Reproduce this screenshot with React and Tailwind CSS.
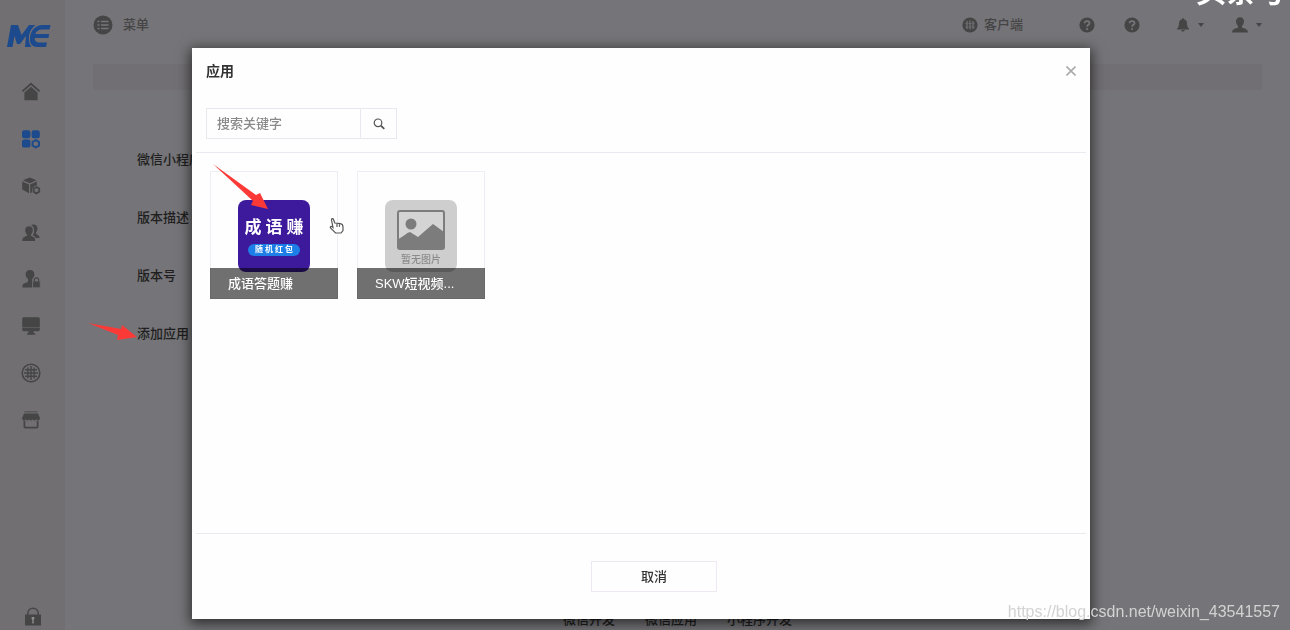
import React, { useState } from "react";

const SIDE_ITEMS = [
  { id: "home", label: "首页" },
  { id: "apps", label: "应用" },
  { id: "box", label: "模块" },
  { id: "users", label: "用户" },
  { id: "userlock", label: "权限" },
  { id: "monitor", label: "系统" },
  { id: "globe", label: "站点" },
  { id: "shop", label: "商城" },
];

const APPS = [
  { id: 1, name: "成语答题赚", cover: "idiom" },
  { id: 2, name: "SKW短视频...", cover: "empty" },
];

const FORM_LABELS = ["微信小程序", "版本描述", "版本号", "添加应用"];

function SideIcon({ name }) {
  const common = {
    viewBox: "0 0 20 20",
    className: "w-5 h-5",
    fill: "currentColor",
    "aria-hidden": true,
  };
  switch (name) {
    case "home":
      return (
        <svg {...common}>
          <path
            d="M1.4 9.400 10 1.800l8.600 7.600"
            fill="none"
            stroke="currentColor"
            strokeWidth="1.800"
          />
          <path d="M10 4.800 3.400 10.600v7.600h13.200v-7.600z" />
        </svg>
      );
    case "apps":
      return (
        <svg {...common}>
          <rect x="1" y="1.200" width="8.400" height="8" rx="2.200" />
          <rect x="10.600" y="1.200" width="8.200" height="8" rx="2.200" />
          <rect x="1" y="10.600" width="8.400" height="8" rx="2.200" />
          <path
            d="m14.800 11.200 3.200 1.800v3.600l-3.200 1.800-3.200-1.800V13z"
            fill="none"
            stroke="currentColor"
            strokeWidth="2"
          />
        </svg>
      );
    case "box":
      return (
        <svg {...common}>
          <path d="m8.800 1.600 6.600 2.600-6.600 3-6.800-3z" />
          <path d="M1.200 5.400 8 8.600v8.600l-6.800-3.600z" />
          <path d="m9.200 8.600 6.600-3.200v4.200c-3 .2-4.800 2-4.800 4.800l.2 1.800-2 1z" />
          <path
            d="m15.400 11 2.800 1.600v3.200l-2.800 1.600-2.800-1.600v-3.200z"
            fill="none"
            stroke="currentColor"
            strokeWidth="1.800"
          />
        </svg>
      );
    case "users":
      return (
        <svg {...common}>
          <path d="M8 3.200c2.400 0 3.800 1.600 3.800 4 0 1.900-.8 3.400-1.800 4.200v1.200c0 .6 3.600 1.400 4 3.200.1.600.1 1.400 0 2.200H1.400c0-1 0-1.800.2-2.400.6-1.600 4.200-2.400 4.400-3v-1.200C5 10.600 4.200 9.100 4.200 7.200c0-2.400 1.400-4 3.800-4z" />
          <path d="M11 1.700c3.200-.8 5.800.8 5.400 4.400-.1 1.500-.7 2.500-1.400 3.300v1c.6.9 3.400 1.300 3.600 4.600h-3.800c-.6-1.400-2-2.200-3.200-2.700 1.100-1.400 1.700-3.100 1.500-5.300-.2-2.300-1-3.900-2.900-4.800z" />
        </svg>
      );
    case "userlock":
      return (
        <svg {...common}>
          <path d="M9 1c2.900 0 4.400 1.900 4.400 4.300 0 2.100-1 3.700-2.200 4.700v8.600H1.400c0-1.200 0-2 .3-2.600.8-1.800 4.700-2.200 5.300-3.400V10C5.600 9 4.600 7.400 4.600 5.300 4.600 2.900 6.100 1 9 1z" />
          <rect
            x="11.600"
            y="12"
            width="7.600"
            height="6.800"
            rx=".8"
            stroke="#716f72"
            strokeWidth=".8"
          />
          <path
            d="M13.400 12.200v-1.400c0-2.600 4.200-2.600 4.200 0v1.400"
            fill="none"
            stroke="currentColor"
            strokeWidth="1.200"
          />
        </svg>
      );
    case "monitor":
      return (
        <svg {...common}>
          <path d="M2.800 1.200h14.400c.9 0 1.600.7 1.600 1.600v8.600H1.200V2.800c0-.9.700-1.600 1.600-1.600z" />
          <path d="M1.200 12h17.600v1.600c0 .9-.7 1.600-1.600 1.600H12.600v2h1.600v1.600H6v-1.600h1.400v-2H2.800c-.9 0-1.600-.7-1.600-1.600z" />
        </svg>
      );
    case "globe":
      return (
        <svg {...common} fill="none" stroke="currentColor" strokeWidth="1.400">
          <circle cx="10" cy="10" r="8.800" strokeWidth="1.600" />
          <path d="M10 3v14M6.900 4.500v11M13.100 4.500v11M3 10h14M4 6.800h12M4 13.200h12" />
        </svg>
      );
    default:
      return (
        <svg {...common}>
          <path d="M3.400 1.200h13.200v1.200H3.400z" opacity=".7" />
          <path d="M3 3.600h14l2 4.600c0 2-2.600 2.800-3.700 1.100-1 1.700-2.900 1.700-3.700 0-.9 1.700-2.600 1.700-3.400 0-.8 1.700-2.700 1.700-3.600 0C3.500 11 1 10.200 1 8.200z" />
          <path
            d="M3.400 10.500v6.300c0 .6.300.9.900.9h11.400c.6 0 .9-.3.900-.9v-6.300"
            fill="none"
            stroke="currentColor"
            strokeWidth="1.800"
          />
        </svg>
      );
  }
}

function Logo() {
  return (
    <svg viewBox="0 0 44 24" className="w-11 h-6" aria-label="MC" role="img">
      <g fill="#1c4a8c">
        <path d="M4 1h7l3.500 10L22 1h6.500c-5 4-7 9-6.500 15 .2 3 1 5 2.500 7H18l1-11-6 8h-3L7.500 12 5.500 23H0z" />
        <path d="M43.500 1 42.500 5.500H35c-3.500 0-5.600 1.600-6.800 4.500h14l-.8 4H27.600c0 2.800 1.600 4.500 4.400 4.500h8L39 23h-9c-5 0-7.500-3.500-7-9 .6-7.500 5.500-13 12.500-13z" />
      </g>
    </svg>
  );
}

function Caret() {
  return (
    <svg viewBox="0 0 6 4" className="w-1.5 h-1" aria-hidden="true">
      <path d="M0 0h6L3 4z" fill="currentColor" />
    </svg>
  );
}

function HelpIcon() {
  return (
    <svg viewBox="0 0 16 16" className="w-4 h-4" aria-hidden="true">
      <circle cx="8" cy="8" r="7.600" fill="currentColor" />
      <path
        d="M5.600 6.300C5.700 3.300 10.600 3.300 10.500 6.200 10.400 7.900 8.100 7.800 8.100 9.800"
        fill="none"
        stroke="#757478"
        strokeWidth="1.800"
      />
      <circle cx="8.100" cy="12" r="1.100" fill="#757478" />
    </svg>
  );
}

function Sidebar() {
  return (
    <aside className="w-[65px] shrink-0 flex flex-col items-center bg-[#716f72] text-[#454546]">
      <a href="#home" className="mt-6 h-6 w-full pl-[7px]">
        <Logo />
      </a>
      <nav className="w-full h-[374px] mt-[21px] flex flex-col">
        {SIDE_ITEMS.map((item) => (
          <a
            key={item.id}
            href={`#${item.id}`}
            aria-label={item.label}
            className={`flex-1 flex items-center pl-[21px] ${
              item.id === "apps" ? "text-[#1c4a8c]" : ""
            }`}
          >
            <SideIcon name={item.id} />
          </a>
        ))}
      </nav>
      <button type="button" aria-label="锁定" className="mt-auto mb-1 w-5 h-5">
        <svg viewBox="0 0 20 20" className="w-5 h-5" aria-hidden="true">
          <path
            d="M4.800 9V7.500c0-7 10.400-7 10.400 0V9"
            fill="none"
            stroke="currentColor"
            strokeWidth="1.500"
          />
          <path d="M2 8.500h16V19.500H2z" fill="currentColor" />
          <path d="M8.800 11h2.400l.4 1.500-.9 1.200V17.500H9.300v-3.800l-.9-1.200z" fill="#8d8c8e" />
        </svg>
      </button>
    </aside>
  );
}

function TopBar() {
  return (
    <header className="h-[50px] flex items-center pl-7 pr-7 text-[#454546]">
      <button type="button" className="flex items-center gap-2.5 font-medium">
        <svg viewBox="0 0 20 20" className="w-5 h-5" aria-hidden="true">
          <circle cx="10" cy="10" r="9.500" fill="currentColor" />
          <path
            d="M4.500 6.500h2M4.500 10h2M4.500 13.500h2M8 6.500h7.500M8 10h7.500M8 13.500h7.500"
            stroke="#757478"
            strokeWidth="1.500"
          />
        </svg>
        菜单
      </button>
      <div className="ml-auto flex items-center">
        <button
          type="button"
          className="flex items-center gap-1.5 mr-14 font-medium"
        >
          <svg viewBox="0 0 16 16" className="w-4 h-4" aria-hidden="true">
            <circle cx="8" cy="8" r="7.600" fill="currentColor" />
            <path
              d="M5 4v8M8 3.500v9M11 4v8"
              stroke="#757478"
              strokeWidth="1.200"
            />
            <path d="M3 6.500h10M3 10h10" stroke="#757478" strokeWidth=".5" />
          </svg>
          客户端
        </button>
        <button type="button" aria-label="帮助" className="mr-[29px]">
          <HelpIcon />
        </button>
        <button type="button" aria-label="常见问题" className="mr-9">
          <HelpIcon />
        </button>
        <button
          type="button"
          aria-label="通知"
          className="flex items-center gap-2 mr-7"
        >
          <svg viewBox="0 0 14 14" className="w-3.5 h-3.5" aria-hidden="true">
            <path
              d="M7 .3c.6 0 1 .4 1 1 2 .5 3 2 3 4 0 3 .8 4.300 2 5.500v.6H1v-.6c1.200-1.200 2-2.500 2-5.500 0-2 1-3.500 3-4 0-.6.4-1 1-1zM5.200 12h3.600c-.3 2-3.300 2-3.600 0z"
              fill="currentColor"
            />
          </svg>
          <Caret />
        </button>
        <button
          type="button"
          aria-label="账户"
          className="flex items-center gap-2"
        >
          <svg viewBox="0 0 14 14" className="w-4 h-4" aria-hidden="true">
            <path
              d="M7 .2c2.200 0 3.500 1.500 3.500 3.600C10.500 5.500 9.700 7 8.800 7.700v1.200c.3 1 4.700 1 5 3.600v1H.2v-1c.3-2.600 4.700-2.600 5-3.600V7.700C4.300 7 3.500 5.500 3.500 3.800 3.500 1.700 4.800.2 7 .2z"
              fill="currentColor"
            />
          </svg>
          <Caret />
        </button>
      </div>
    </header>
  );
}

function AppCover({ type }) {
  if (type === "idiom") {
    return (
      <div className="w-[72px] h-[72px] rounded-lg bg-[#3d1a9c] flex flex-col items-center pt-4">
        <span className="text-[17px] leading-6 font-bold text-white flex gap-1">
          <span>成</span>
          <span>语</span>
          <span>赚</span>
        </span>
        <span className="mt-1 w-[52px] h-3 rounded-full bg-[#1c7ee6] text-white text-[8px] leading-3 font-bold text-center flex justify-center gap-0.5">
          <span>随</span>
          <span>机</span>
          <span>红</span>
          <span>包</span>
        </span>
      </div>
    );
  }
  return (
    <div className="w-[72px] h-[72px] rounded-lg bg-[#cecece] flex flex-col items-center pt-2.5">
      <svg viewBox="0 0 48 40" className="w-12 h-10" aria-hidden="true">
        <rect
          x="1"
          y="1"
          width="46"
          height="38"
          rx="2"
          fill="#d4d4d4"
          stroke="#7c7c7c"
          strokeWidth="2"
        />
        <circle cx="14" cy="14" r="5.500" fill="#7c7c7c" />
        <path d="M1 29c5-2 8-6 12-7l8 5 15-13 11 8v17H1z" fill="#7c7c7c" />
      </svg>
      <span className="mt-1 text-[10px] leading-3 font-medium text-[#8c8c8c]">
        暂无图片
      </span>
    </div>
  );
}

function AppCard({ app }) {
  return (
    <button
      type="button"
      className="w-32 h-32 border border-[#efecf3] flex flex-col items-center relative pt-7"
    >
      <AppCover type={app.cover} />
      <span className="absolute -inset-x-px -bottom-px h-[31px] bg-black/56 text-white font-medium leading-[31px] text-left pl-[18px]">
        {app.name}
      </span>
    </button>
  );
}

function AppDialog({ onClose }) {
  const [keyword, setKeyword] = useState("");
  const list = APPS.filter((app) => app.name.includes(keyword));

  return (
    <div className="fixed inset-0 flex justify-center pt-12 pb-[11px] pl-48 pr-[200px]">
      <div
        role="dialog"
        aria-modal="true"
        aria-labelledby="dialog-title"
        className="w-full flex flex-col bg-[#fefefe] text-[#333] shadow-[0_3px_12px_2px_rgba(0,0,0,0.6)]"
      >
        <div className="h-[46px] shrink-0 flex items-center justify-between px-3.5">
          <h2 id="dialog-title" className="text-sm font-bold">
            应用
          </h2>
          <button type="button" aria-label="关闭" onClick={onClose}>
            <svg viewBox="0 0 10 10" className="w-2.5 h-2.5" aria-hidden="true">
              <path d="m.5.5 9 9M9.500.5l-9 9" stroke="#aaa" strokeWidth="1.600" />
            </svg>
          </button>
        </div>
        <form
          className="mt-3.5 mx-3.5 flex h-[31px] w-[191px] shrink-0 border border-[#e9e8ee]"
          onSubmit={(e) => e.preventDefault()}
        >
          <input
            type="text"
            aria-label="搜索关键字"
            placeholder="搜索关键字"
            value={keyword}
            onChange={(e) => setKeyword(e.target.value)}
            className="min-w-0 flex-1 pl-2.5 font-medium outline-none placeholder:text-[#8a8a8a]"
          />
          <button
            type="submit"
            aria-label="搜索"
            className="w-9 flex items-center justify-center border-l border-[#e9e8ee]"
          >
            <svg viewBox="0 0 12 12" className="w-3 h-3" aria-hidden="true">
              <circle
                cx="5"
                cy="4.800"
                r="3.800"
                fill="none"
                stroke="#555"
                strokeWidth="1.200"
              />
              <path d="m7.800 7.600 3.500 3.200" stroke="#555" strokeWidth="1.800" />
            </svg>
          </button>
        </form>
        <div className="mt-[13px] mx-1 flex-1 border-y border-[#ebe9ef] flex items-start gap-[19px] pt-[18px] pl-3.5">
          {list.map((app) => (
            <AppCard key={app.id} app={app} />
          ))}
        </div>
        <div className="h-[85px] shrink-0 flex items-center justify-center pl-[26px]">
          <button
            type="button"
            onClick={onClose}
            className="w-[126px] h-[31px] border border-[#eee9f0] font-medium"
          >
            取消
          </button>
        </div>
      </div>
    </div>
  );
}

export default function App() {
  const [open, setOpen] = useState(true);

  return (
    <div className="relative min-h-screen flex overflow-hidden bg-[#757478] text-[13px] leading-5 font-['Liberation_Sans','Noto_Sans_CJK_SC',sans-serif]">
      <Sidebar />
      <main className="flex-1 flex flex-col">
        <TopBar />
        <div className="mt-3.5 mx-7 h-[26px] bg-[#716f73]" />
        <div className="mt-[60px] ml-[72px] flex flex-col gap-[38px] font-medium text-[#1f1f20]">
          {FORM_LABELS.map((label) => (
            <div key={label}>{label}</div>
          ))}
        </div>
        <footer className="mt-auto h-5 pl-[498px] flex gap-[30px] font-medium text-[#1f1f20]">
          <a href="#wxdev">微信开发</a>
          <a href="#wxapp">微信应用</a>
          <a href="#mini">小程序开发</a>
        </footer>
      </main>

      {open && <AppDialog onClose={() => setOpen(false)} />}

      {/* annotations drawn over the screen */}
      <svg
        className="absolute left-[88px] top-[160px] w-[184px] h-[182px] pointer-events-none"
        viewBox="88 160 184 182"
        fill="#fb3a37"
        aria-hidden="true"
      >
        <path d="m213 164 43 31 4-2 8 16-17-4 2-4z" />
        <path d="m88 323 33 6 1-4 15 12-20 3 1-5z" />
      </svg>
      <svg
        className="absolute left-[329px] top-[218px] w-4 h-4 pointer-events-none"
        viewBox="0 0 16 16"
        fill="#fff"
        stroke="#555"
        strokeWidth="1.200"
        aria-hidden="true"
      >
        <path d="M4 9.500 2.500 2c-.2-1.500 1.600-1.800 2-.5L5.800 5l5.500.6c2 .3 2.700 1.500 2.700 3.400v3.500L12 15H6.500L1.500 10c-.8-1.300.8-2 1.700-1.200z" />
        <path d="M8 6v3M10.500 6.200v2.500" />
      </svg>
      <div className="absolute right-1 -top-6 text-[30px] leading-8 font-bold text-white">
        头条号
      </div>
      <div className="absolute right-2.5 bottom-2 text-base leading-5 text-[#d2d2d2] font-['Liberation_Sans',sans-serif]">
        https://blog.csdn.net/weixin_43541557
      </div>
    </div>
  );
}
